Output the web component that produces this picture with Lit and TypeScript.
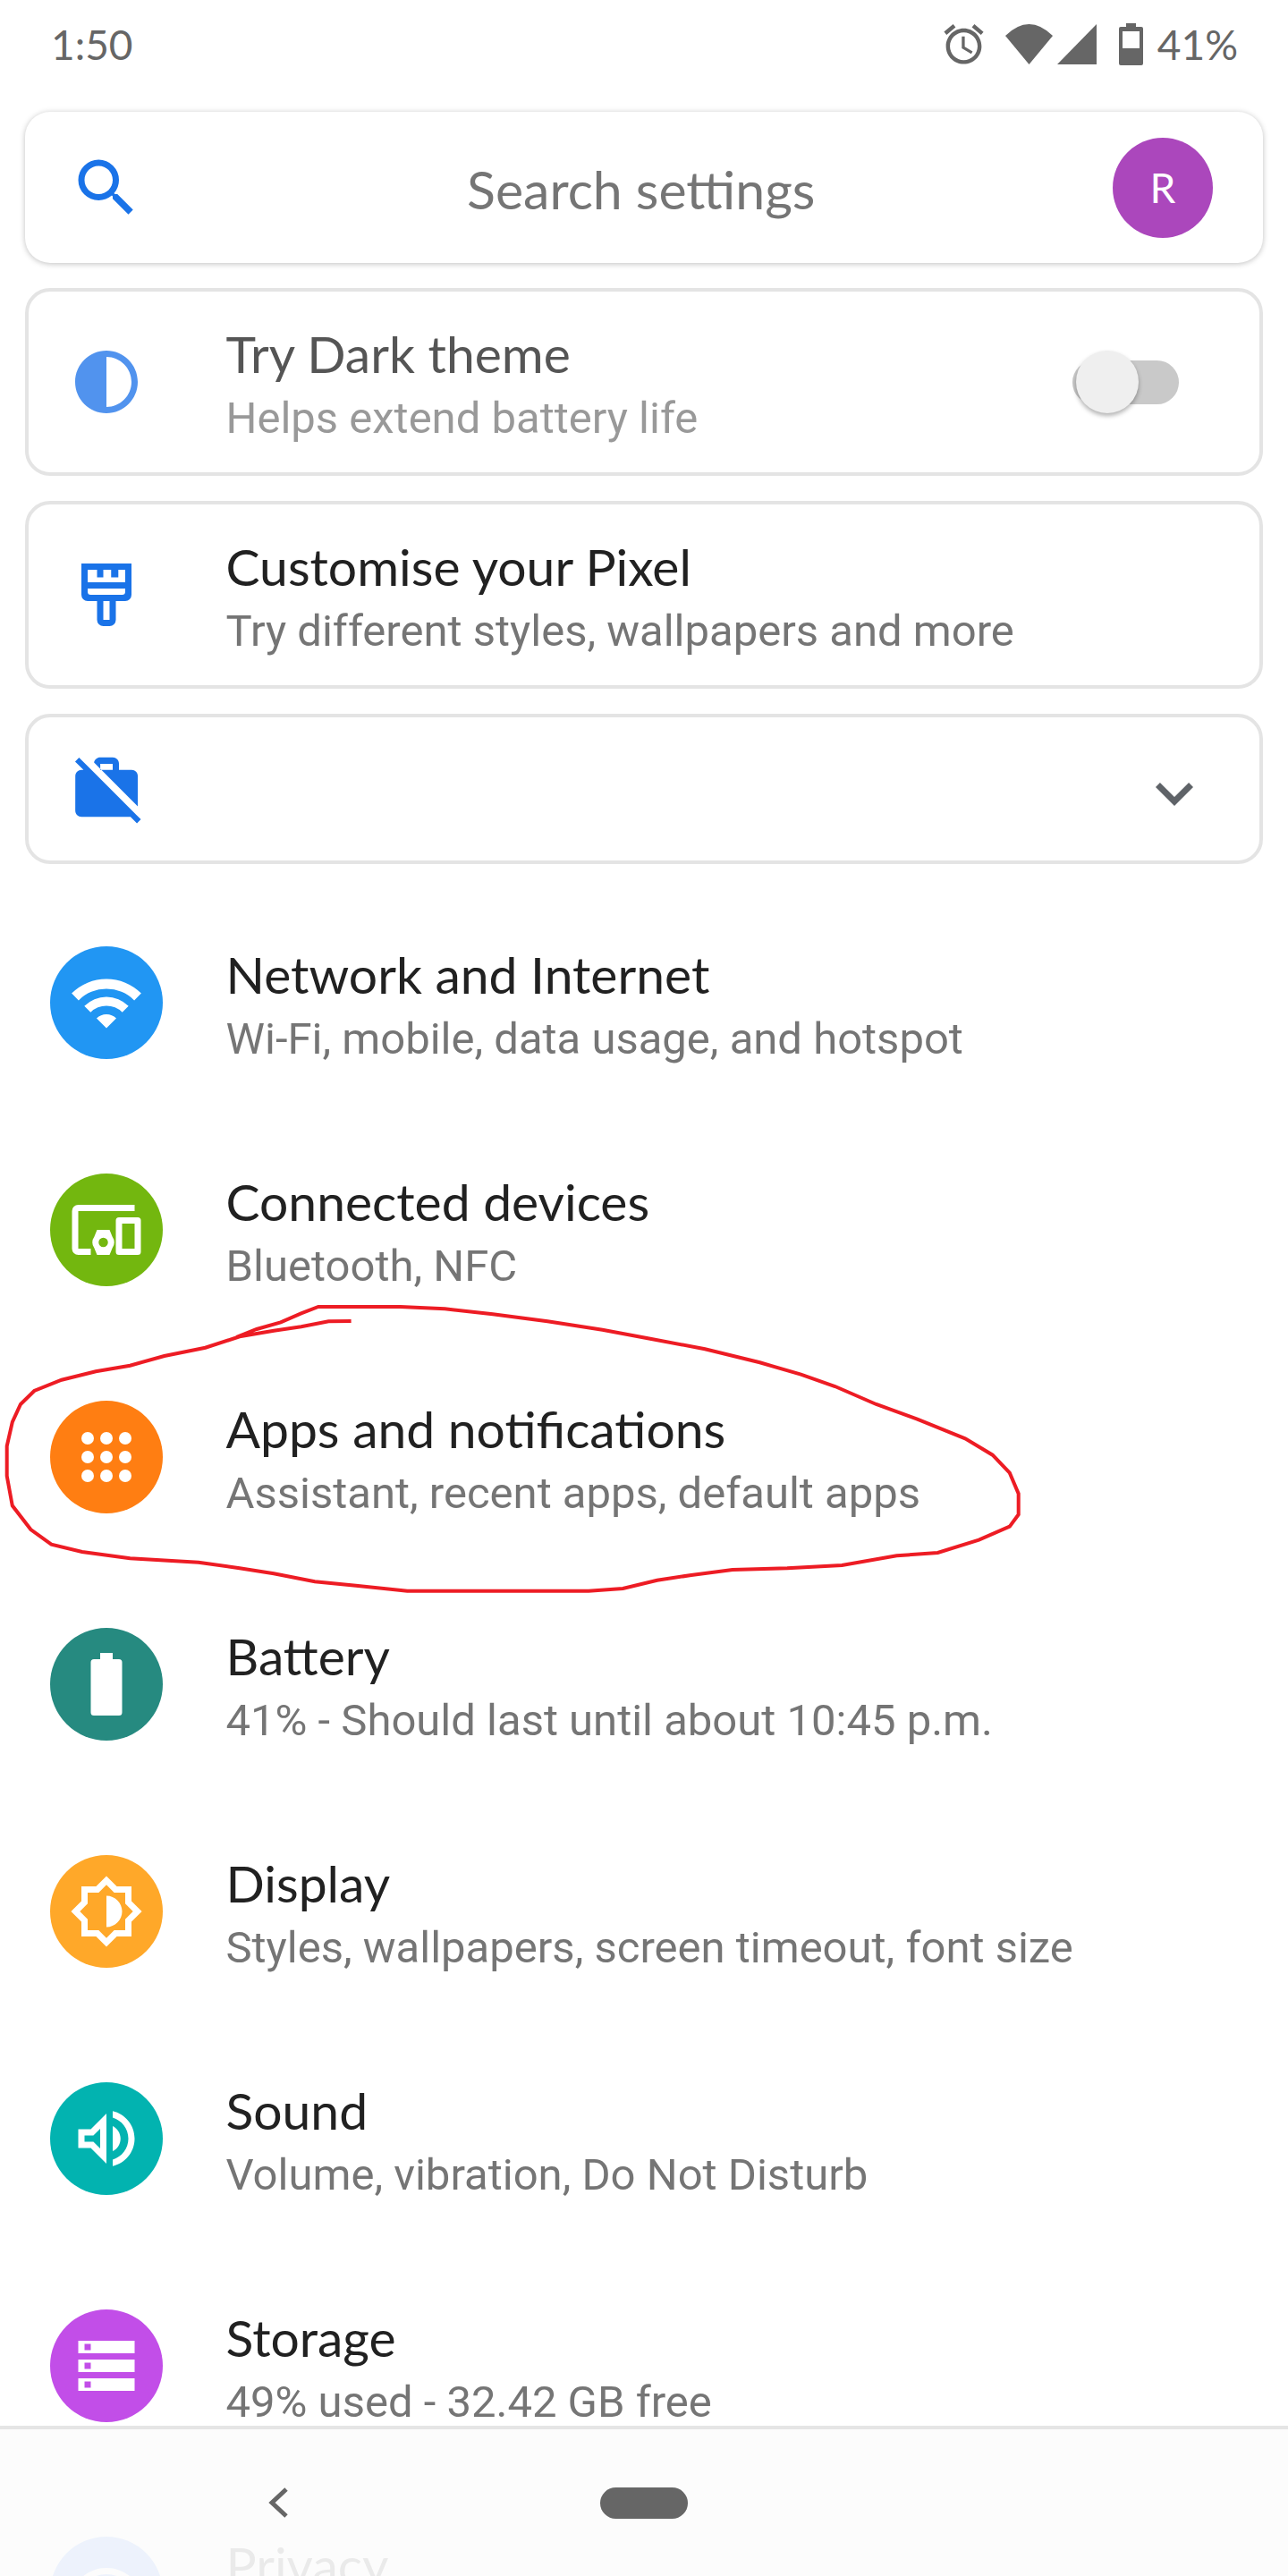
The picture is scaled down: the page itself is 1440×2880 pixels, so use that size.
import { LitElement, html, css, svg } from 'lit';
import { customElement } from 'lit/decorators.js';

const apps = [6, 12, 18].flatMap((y) =>
  [6, 12, 18].map((x) => svg`<circle cx=${x} cy=${y} r="2" />`)
);

const rows = [
  {
    title: 'Network and Internet',
    sub: 'Wi-Fi, mobile, data usage, and hotspot',
    color: '#2196f3',
    icon: svg`<g transform="scale(.2857)"><path d="M3.1 31.6A55 55 0 0 1 80.9 31.6L73.1 39.4A44 44 0 0 0 10.9 39.4ZM17.3 45.8A35 35 0 0 1 66.7 45.8L59.7 52.8A25 25 0 0 0 24.3 52.8ZM31 59.5A15.5 15.5 0 0 1 53 59.5L42 70.5Z" /></g>`,
  },
  {
    title: 'Connected devices',
    sub: 'Bluetooth, NFC',
    color: '#73b70f',
    icon: svg`<path fill-rule="evenodd" d="M21 4H3a2 2 0 0 0-2 2v12a2 2 0 0 0 2 2h4v-2H3V6h18zM16 8h6a1 1 0 0 1 1 1v10a1 1 0 0 1-1 1h-6a1 1 0 0 1-1-1V9a1 1 0 0 1 1-1zM17 10v8h4v-8zM9 12h4l.9 2.2a3 3 0 0 1 0 3.6L13 20H9l-.9-2.2a3 3 0 0 1 0-3.6zM11 14.5a1.5 1.5 0 1 0 0 3 1.5 1.5 0 0 0 0-3z" />`,
  },
  {
    title: 'Apps and notifications',
    sub: 'Assistant, recent apps, default apps',
    color: '#ff7e12',
    icon: apps,
  },
  {
    title: 'Battery',
    sub: '41% - Should last until about 10:45 p.m.',
    color: '#268a80',
    icon: svg`<path d="M10 2h4v2h2a1 1 0 0 1 1 1v16a1 1 0 0 1-1 1H8a1 1 0 0 1-1-1V5a1 1 0 0 1 1-1h2z" />`,
  },
  {
    title: 'Display',
    sub: 'Styles, wallpapers, screen timeout, font size',
    color: '#ffa829',
    icon: svg`<path d="M20 8.69V4h-4.69L12 .69 8.69 4H4v4.69L.69 12 4 15.31V20h4.69L12 23.31 15.31 20H20v-4.69L23.31 12 20 8.69zm-2 5.79V18h-3.52L12 20.48 9.52 18H6v-3.52L3.52 12 6 9.52V6h3.52L12 3.52 14.48 6H18v3.52L20.48 12 18 14.48zM12 7v10c2.76 0 5-2.24 5-5s-2.24-5-5-5z" />`,
  },
  {
    title: 'Sound',
    sub: 'Volume, vibration, Do Not Disturb',
    color: '#02b3b0',
    icon: svg`<path d="M3 9v6h4l5 5V4L7 9H3zm7-.17v6.34L7.83 13H5v-2h2.83L10 8.83zM16.5 12c0-1.77-1.02-3.29-2.5-4.03v8.05c1.48-.73 2.5-2.25 2.5-4.02zM14 3.23v2.06c2.89.86 5 3.54 5 6.71s-2.11 5.85-5 6.71v2.06c4.01-.91 7-4.49 7-8.77 0-4.28-2.99-7.86-7-8.77z" />`,
  },
  {
    title: 'Storage',
    sub: '49% used - 32.42 GB free',
    color: '#c24ee8',
    icon: svg`<path fill-rule="evenodd" d="M3 4h18v4H3zM5 5v2h2V5zM3 10h18v4H3zM5 11v2h2v-2zM3 16h18v4H3zM5 17v2h2v-2z" />`,
  },
  {
    // runs under the nav bar and off the bottom of the screen
    title: 'Privacy',
    sub: '',
    color: '#4285f4',
    icon: svg`<path d="M12 6c3.79 0 7.17 2.13 8.82 5.5C19.17 14.87 15.79 17 12 17s-7.17-2.13-8.82-5.5C4.83 8.13 8.21 6 12 6m0-2C7 4 2.73 7.11 1 11.5 2.73 15.89 7 19 12 19s9.27-3.11 11-7.5C21.27 7.11 17 4 12 4zm0 5a2.5 2.5 0 0 1 0 5 2.5 2.5 0 0 1 0-5m0-2c-2.48 0-4.5 2.02-4.5 4.5S9.52 16 12 16s4.5-2.02 4.5-4.5S14.48 7 12 7z" />`,
  },
];

// pen stroke round "Apps and notifications", traced off the reference
const scribble = [
  [513, 231], [480, 232], [440, 250], [400, 263], [350, 283], [300, 320], [240, 348], [190, 380],
  [140, 400], [90, 428], [50, 465], [30, 510], [18, 570], [10, 650], [10, 750], [18, 850],
  [45, 930], [75, 980], [120, 1005], [190, 1027], [290, 1040], [350, 1060], [400, 1078], [460, 1105],
  [520, 1118], [595, 1136], [860, 1136], [910, 1128], [960, 1100], [1010, 1083], [1070, 1065], [1150, 1060],
  [1230, 1050], [1310, 1018], [1370, 1008], [1430, 965], [1475, 920], [1488, 880], [1488, 810], [1475, 740],
  [1450, 680], [1410, 625], [1340, 560], [1280, 510], [1220, 450], [1170, 410], [1110, 370], [1030, 325],
  [950, 290], [880, 260], [800, 232], [720, 208], [650, 190], [585, 183], [465, 183], [440, 205],
  [410, 235], [375, 258], [345, 285],
]
  .map(([x, y]) => `${(x / 1.3067).toFixed(1)},${(1400 + y / 3).toFixed(1)}`)
  .join(' ');

@customElement('app-root')
export class AppRoot extends LitElement {
  static styles = css`
    :host {
      display: block;
      position: relative;
      width: 1440px;
      height: 2880px;
      overflow: hidden;
      background: #fff;
      font-family: Lato, 'Liberation Sans', sans-serif;
      color: #212121;
    }

    .status {
      display: flex;
      align-items: center;
      height: 50px;
      padding: 24px 56px 51px 57px;
      color: #666;
      font-size: 46px;
    }

    .status .time {
      margin-right: auto;
    }

    .status svg {
      fill: #666;
      flex: none;
    }

    .alarm {
      width: 53px;
      height: 53px;
      margin-right: 20px;
    }

    .wifi {
      width: 53px;
      height: 45px;
      margin-right: 5px;
    }

    .signal {
      width: 44px;
      height: 45px;
      margin-right: 25px;
    }

    .batt {
      width: 27px;
      height: 47px;
      margin-right: 16px;
    }

    .cards {
      display: flex;
      flex-direction: column;
      gap: 28px;
      padding: 0 28px 28px;
    }

    .card {
      display: flex;
      align-items: center;
      box-sizing: border-box;
      border: 4px solid #e4e4e4;
      border-radius: 28px;
      padding-left: 44.5px;
      background: #fff;
    }

    .card.search {
      height: 169px;
      border: none;
      padding-left: 48.5px;
      padding-right: 56px;
      box-shadow: 0 1px 6px rgba(0, 0, 0, 0.25);
    }

    .card.tall {
      height: 210px;
    }

    .card.short {
      height: 168px;
      padding-right: 53px;
      justify-content: space-between;
    }

    .glyph {
      width: 84px;
      height: 84px;
      flex: none;
      fill: #1a73e8;
    }

    .glyph.off {
      fill: #5193ee;
    }

    .chevron {
      fill: #5f6368;
      transform: translateY(5px);
    }

    .placeholder {
      flex: 1;
      padding: 3px 0 0 29px;
      text-align: center;
      font-size: 59px;
      color: #757575;
    }

    .avatar {
      width: 112px;
      height: 112px;
      border-radius: 50%;
      background: #ab47bc;
      color: #fff;
      font-size: 46px;
      display: flex;
      align-items: center;
      justify-content: center;
    }

    .text {
      margin-left: 92px;
      flex: 1;
      padding-top: 9px;
    }

    .title {
      font-size: 57px;
      line-height: 68px;
      color: #212121;
    }

    .sub {
      height: 68px;
      margin-top: 5px;
      font-family: Roboto, sans-serif;
      font-size: 49px;
      line-height: 68px;
      color: #757575;
    }

    .dim .title {
      color: #555;
    }

    .dim .sub {
      color: #999;
    }

    .toggle {
      position: relative;
      width: 119px;
      height: 49px;
      margin-right: 90px;
      border-radius: 25px;
      background: #c9c9c9;
      flex: none;
    }

    .thumb {
      position: absolute;
      left: 4px;
      top: -10.5px;
      width: 70px;
      height: 70px;
      border-radius: 50%;
      background: #efefef;
      box-shadow: 0 3px 5px rgba(0, 0, 0, 0.3);
    }

    .row {
      display: flex;
      align-items: center;
      height: 254px;
      padding-left: 56px;
    }

    .badge {
      width: 126px;
      height: 126px;
      border-radius: 50%;
      flex: none;
      display: flex;
      align-items: center;
      justify-content: center;
    }

    .badge svg {
      width: 84px;
      height: 84px;
      fill: #fff;
    }

    .row .text {
      margin-left: 70.5px;
    }

    .nav {
      position: absolute;
      left: 0;
      right: 0;
      bottom: 0;
      height: 164px;
      display: flex;
      align-items: center;
      padding-left: 300px;
      border-top: 4px solid #e5e5e5;
      background: rgba(252, 252, 252, 0.92);
    }

    .back {
      width: 22px;
      height: 34px;
      fill: none;
      stroke: #666;
      stroke-width: 5;
    }

    .pill {
      width: 98px;
      height: 35px;
      margin-left: 349px;
      border-radius: 18px;
      background: #666;
    }

    .scribble {
      position: absolute;
      left: 0;
      top: 0;
      width: 1440px;
      height: 2880px;
      fill: none;
      stroke: #ed1c24;
      stroke-width: 4;
      pointer-events: none;
    }
  `;

  render() {
    return html`
      <div class="status">
        <span class="time">1:50</span>
        <svg class="alarm" viewBox="0 0 24 24"><path d="M22 5.72l-4.6-3.86-1.29 1.53 4.6 3.86L22 5.72zM7.88 3.39L6.6 1.86 2 5.71l1.29 1.53 4.59-3.85zM12.5 8H11v6l4.75 2.85.75-1.23-4-2.37V8zM12 4c-4.97 0-9 4.03-9 9s4.03 9 9 9 9-4.03 9-9-4.03-9-9-9zm0 16c-3.87 0-7-3.13-7-7s3.13-7 7-7 7 3.13 7 7-3.13 7-7 7z" /></svg>
        <svg class="wifi" viewBox="0 0 53 45"><path d="M0 13Q26.5-13 53 13L26.5 45z" /></svg>
        <svg class="signal" viewBox="0 0 44 45"><path d="M44 0V45H0z" /></svg>
        <svg class="batt" viewBox="0 0 27 47"><path fill-rule="evenodd" d="M8 0h11v4h6a2 2 0 0 1 2 2v39a2 2 0 0 1-2 2H2a2 2 0 0 1-2-2V6a2 2 0 0 1 2-2h6zM4 9v19h19V9z" /></svg>
        <span>41%</span>
      </div>

      <div class="cards">
        <div class="card search">
          <svg class="glyph" viewBox="0 0 24 24"><path d="M15.5 14h-.79l-.28-.27A6.471 6.471 0 0 0 16 9.5 6.5 6.5 0 1 0 9.5 16c1.61 0 3.09-.59 4.23-1.57l.27.28v.79l5 4.99L20.49 19l-4.99-5zm-6 0C7.01 14 5 11.99 5 9.5S7.01 5 9.5 5 14 7.01 14 9.5 11.99 14 9.5 14z" /></svg>
          <div class="placeholder">Search settings</div>
          <div class="avatar">R</div>
        </div>

        <div class="card tall dim">
          <svg class="glyph off" viewBox="0 0 24 24"><path d="M12 22c5.52 0 10-4.48 10-10S17.52 2 12 2 2 6.48 2 12s4.48 10 10 10zm0-18c4.41 0 8 3.59 8 8s-3.59 8-8 8V4z" /></svg>
          <div class="text">
            <div class="title">Try Dark theme</div>
            <div class="sub">Helps extend battery life</div>
          </div>
          <div class="toggle"><div class="thumb"></div></div>
        </div>

        <div class="card tall">
          <svg class="glyph" viewBox="0 0 24 24"><path fill-rule="evenodd" d="M4 2h16v10a2 2 0 0 1-2 2h-3v6a2 2 0 0 1-2 2h-2a2 2 0 0 1-2-2v-6H6a2 2 0 0 1-2-2zM6 4h3v2.4h2V4h2.5v2.4h2.3V4H18v4H6zM6 10h12v1a1 1 0 0 1-1 1H7a1 1 0 0 1-1-1zM11 14h2v6h-2z" /></svg>
          <div class="text">
            <div class="title">Customise your Pixel</div>
            <div class="sub">Try different styles, wallpapers and more</div>
          </div>
        </div>

        <div class="card short">
          <svg class="glyph" viewBox="0 0 24 24"><path d="M23 21.74l-1.46-1.46L7.21 5.95 3.25 1.99 1.99 3.25l2.7 2.7h-.64c-1.11 0-1.99.89-1.99 2l-.01 11c0 1.11.89 2 2 2h15.64L21.74 23 23 21.74zM22 7.95c.05-1.11-.84-2-1.95-2H16v-2c0-1.11-.89-2-2-2h-4c-.99 0-1.8.7-1.96 1.64L22 17.59V7.95zM14 5.95h-3.97V4H14v1.95z" /></svg>
          <svg class="glyph chevron" viewBox="0 0 24 24"><path d="M16.59 8.59L12 13.17 7.41 8.59 6 10l6 6 6-6z" /></svg>
        </div>
      </div>

      ${rows.map(
        (r) => html`
          <div class="row">
            <div class="badge" style="background:${r.color}">
              <svg viewBox="0 0 24 24">${r.icon}</svg>
            </div>
            <div class="text">
              <div class="title">${r.title}</div>
              <div class="sub">${r.sub}</div>
            </div>
          </div>
        `
      )}

      <div class="nav">
        <svg class="back" viewBox="0 0 22 34"><path d="M20 2L4 17l16 15" /></svg>
        <div class="pill"></div>
      </div>

      <svg class="scribble" viewBox="0 0 1440 2880"><polyline points=${scribble} /></svg>
    `;
  }
}

declare global {
  interface HTMLElementTagNameMap {
    'app-root': AppRoot;
  }
}
